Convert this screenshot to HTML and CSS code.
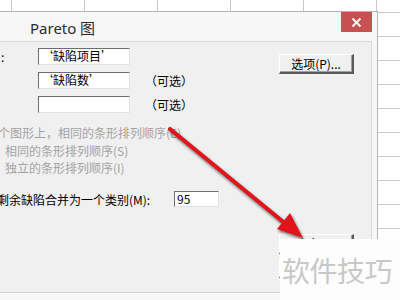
FILE: index.html
```html
<!DOCTYPE html>
<html lang="zh-CN">
  <head>
    <meta charset="utf-8">
    <title>Pareto 图</title>
    <link rel="stylesheet" href="styles.css">
  </head>
  <body>
    <div class="screen">
      <div class="dialog">
        <div class="titlebar">
          <span class="title">Pareto 图</span>
          <span class="close">
            <svg width="11" height="11" viewBox="0 0 11 11"><path d="M1.5 1.5 L9.5 9.5 M9.5 1.5 L1.5 9.5" stroke="#fff" stroke-width="1.8"/></svg>
          </span>
        </div>
        <div class="client">
          <div class="top">
            <div class="fields">
              <div class="row"><span class="label">:</span><span class="input">‘缺陷项目’</span></div>
              <div class="row"><span class="label"></span><span class="input">‘缺陷数’</span><span class="opt">（可选）</span></div>
              <div class="row"><span class="label"></span><span class="input"></span><span class="opt">（可选）</span></div>
            </div>
            <div class="btn">选项(P)...</div>
          </div>
          <div class="order">
            <p class="first">个图形上，相同的条形排列顺序(E)</p>
            <p class="sub">相同的条形排列顺序(S)</p>
            <p class="sub">独立的条形排列顺序(I)</p>
          </div>
          <div class="merge">
            <span class="merge-label">剩余缺陷合并为一个类别(M):</span>
            <span class="input small">95</span>
          </div>
          <div class="actions">
            <div class="btn">确定(O)</div>
            <div class="btn">取消</div>
          </div>
        </div>
      </div>
      <svg class="arrow" width="400" height="300" viewBox="0 0 400 300">
        <g class="arrow-shape">
          <line x1="170" y1="129" x2="287" y2="225" stroke="#e0141a" stroke-width="4" stroke-linecap="round"/>
          <polygon points="303,238 277,229 290,213" fill="#e0141a"/>
        </g>
      </svg>
      <div class="watermark">软件技巧</div>
    </div>
  </body>
</html>
```

FILE: styles.css
```css
html, body {
  margin: 0;
  padding: 0;
}
.screen {
  position: relative;
  width: 400px;
  height: 300px;
  overflow: hidden;
  background-color: #fff;
  background-image:
    linear-gradient(to right, #c8c8c8 1px, transparent 1px),
    linear-gradient(to bottom, #c8c8c8 1px, transparent 1px);
  background-size: 73px 100%, 100% 24px;
  background-position: 11px 0, 0 12px;
  font-family: "Noto Sans CJK SC", sans-serif;
  font-size: 12px;
  color: #000;
}
.dialog {
  box-sizing: border-box;
  margin-top: 11px;
  width: 378px;
  height: 289px;
  background: #f7f7f7;
  border-top: 1px solid #b4b4b4;
  border-right: 1px solid #b4b4b4;
}
.titlebar {
  display: flex;
  justify-content: space-between;
  height: 29px;
}
.title {
  padding: 5px 0 0 30px;
  font-family: "Noto Sans", sans-serif;
  font-size: 15px;
  color: #2b2b2b;
}
.close {
  display: flex;
  align-items: center;
  justify-content: center;
  width: 31px;
  height: 20px;
  margin-right: 5px;
  background: #c75050;
}
.client {
  box-sizing: border-box;
  width: 372px;
  height: 252px;
  background: #f0f0f0;
  border-top: 1px solid #d9d9d9;
  border-right: 1px solid #d9d9d9;
  border-bottom: 1px solid #d2d2d2;
}
.top {
  display: flex;
  padding-top: 6px;
}
.fields {
  display: flex;
  flex-direction: column;
  gap: 7px;
}
.row {
  display: flex;
  align-items: center;
  height: 17px;
}
.label {
  width: 38px;
  padding-left: 1px;
  box-sizing: border-box;
}
.input {
  box-sizing: border-box;
  width: 92px;
  height: 17px;
  line-height: 14px;
  padding-left: 2px;
  background: #fff;
  border-top: 1px solid #6d6d6d;
  border-left: 1px solid #6d6d6d;
  border-bottom: 1px solid #e3e3e3;
  border-right: 1px solid #e3e3e3;
  white-space: nowrap;
}
.input.small {
  width: 45px;
  height: 16px;
}
.opt {
  margin-left: 15px;
}
.btn {
  box-sizing: border-box;
  width: 75px;
  height: 20px;
  line-height: 17px;
  text-align: center;
  background: #f0f0f0;
  border-top: 1px solid #fff;
  border-left: 1px solid #fff;
  border-bottom: 2px solid #5a5a5a;
  border-right: 2px solid #5a5a5a;
  box-shadow: inset -1px -1px 0 #a0a0a0;
}
.top .btn {
  margin: 6px 17px 0 auto;
}
.order {
  margin-top: 11px;
  color: #a3a3a3;
}
.order p {
  margin: 0;
  height: 17.5px;
  line-height: 17.5px;
  white-space: nowrap;
}
.order .first {
  margin-left: -2px;
}
.order .sub {
  padding-left: 5px;
}
.merge {
  display: flex;
  align-items: center;
  margin-top: 14px;
}
.merge-label {
  width: 177px;
  margin-left: -3px;
  white-space: nowrap;
}
.actions {
  display: flex;
  flex-direction: column;
  align-items: flex-end;
  gap: 4px;
  margin-top: 26px;
  padding-right: 17px;
}
.arrow {
  position: absolute;
  left: 0;
  top: 0;
  pointer-events: none;
}
.arrow-shape {
  filter: drop-shadow(1px 2px 1.5px rgba(0, 0, 0, 0.55));
}
.watermark {
  position: absolute;
  left: 280px;
  top: 239px;
  width: 120px;
  height: 61px;
  box-sizing: border-box;
  padding-left: 2px;
  display: flex;
  align-items: center;
  background: #fdfdfd;
  color: #c8c8c8;
  font-size: 28px;
  letter-spacing: -0.5px;
  white-space: nowrap;
}
```
